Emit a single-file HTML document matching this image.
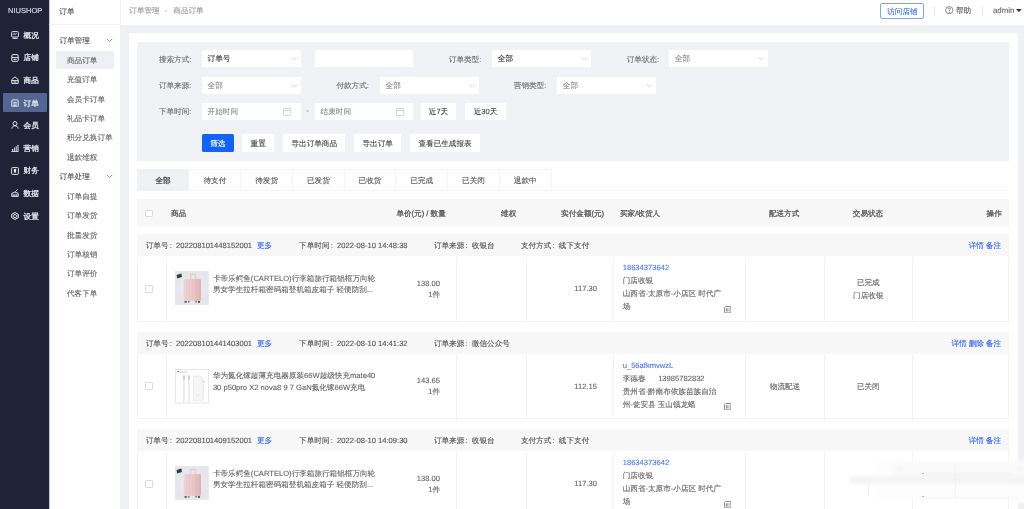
<!DOCTYPE html>
<html><head><meta charset="utf-8">
<style>
*{margin:0;padding:0;box-sizing:border-box}
html,body{width:1024px;height:509px;overflow:hidden}
body{position:relative;text-rendering:geometricPrecision;background:#eff0f4;font-family:"Liberation Sans",sans-serif;font-size:7.6px;color:#555}
#root{position:absolute;left:0;top:0;width:1024px;height:509px;will-change:transform;filter:blur(0.35px)}
.a{position:absolute}
.t{position:absolute;white-space:nowrap;line-height:10px;-webkit-text-stroke-width:0.12px}
.sb{color:#e3e5ec;-webkit-text-stroke-width:0.3px}
.s2h{color:#555}
.s2{color:#666}
.lbl{color:#6e6e6e}
.vd{color:#333}
.vl{color:#8c8c8c}
.vb{color:#444}
.tab{color:#555}
.th{color:#555;-webkit-text-stroke:0.25px #555}
.oh{color:#555}
.lk{color:#2f62f6}
.lk2{color:#4f76f6}
.bd{color:#666}
.fc{display:inline-block;width:7.6px;padding-left:1.2px}
</style></head><body><div id="root">

<div class="a" style="left:0.00px;top:0.00px;width:49.30px;height:509.00px;background:#1e2338"></div>
<div class="a" style="left:49.30px;top:0.00px;width:70.70px;height:509.00px;background:#fff"></div>
<div class="a" style="left:49.20px;top:0.00px;width:0.90px;height:509.00px;background:#c9cbd3"></div>
<div class="a" style="left:120.00px;top:0.00px;width:904.00px;height:24.70px;background:#fff"></div>
<div class="a" style="left:120.00px;top:0.00px;width:0.80px;height:24.70px;background:#f2f2f2"></div>
<div class="a" style="left:128.85px;top:32.90px;width:888.75px;height:476.10px;background:#fff"></div>
<div class="a" style="left:137.10px;top:41.60px;width:872.00px;height:119.00px;background:#f1f2f5"></div>
<div class="t" style="left:8.2px;top:7.2px;font-size:7.2px;line-height:8px;color:#cfd2da;letter-spacing:0px;-webkit-text-stroke-width:0.2px;transform:scaleX(1.05);transform-origin:0 0">NIUSHOP</div>
<div class="a" style="left:2.90px;top:93.30px;width:44.00px;height:19.20px;background:#536692;border-radius:1px"></div>
<svg class="a" style="left:11px;top:31.00px" width="8" height="8" viewBox="0 0 8 8" fill="none" stroke="#e3e5ec" stroke-width="1"><rect x="0.6" y="0.6" width="6.8" height="5.4" rx="0.8"/><path d="M1.8 3.6 L3 2.6 L4.2 3.4 L5.6 2.4"/><path d="M1.5 7.4 H6.5"/></svg>
<div class="t sb" style="left:23.60px;top:30.80px;">概况</div>
<svg class="a" style="left:11px;top:53.60px" width="8" height="8" viewBox="0 0 8 8" fill="none" stroke="#e3e5ec" stroke-width="1"><rect x="0.8" y="0.6" width="6.4" height="6.8" rx="1.2"/><path d="M0.8 3.6 H7.2"/><path d="M2.4 5.4 H5.6"/></svg>
<div class="t sb" style="left:23.60px;top:53.40px;">店铺</div>
<svg class="a" style="left:11px;top:76.20px" width="8" height="8" viewBox="0 0 8 8" fill="none" stroke="#e3e5ec" stroke-width="1"><path d="M0.8 7.4 V3.6 L4 0.8 L7.2 3.6 V7.4 Z"/><path d="M0.8 4.6 H7.2"/><path d="M2.6 6 H5.4"/></svg>
<div class="t sb" style="left:23.60px;top:76.00px;">商品</div>
<svg class="a" style="left:11px;top:98.80px" width="8" height="8" viewBox="0 0 8 8" fill="none" stroke="#e3e5ec" stroke-width="1"><rect x="0.8" y="0.9" width="6.4" height="7" rx="0.6"/><path d="M2.2 3.4 H5.8 M2.2 5 H5.8 M2.2 6.6 H5.8"/></svg>
<div class="t sb" style="left:23.60px;top:98.60px;">订单</div>
<svg class="a" style="left:11px;top:121.40px" width="8" height="8" viewBox="0 0 8 8" fill="none" stroke="#e3e5ec" stroke-width="1"><circle cx="4" cy="2.6" r="2"/><path d="M0.8 7.6 C1.2 5.4 2.4 4.8 4 4.8 C5.6 4.8 6.8 5.4 7.2 7.6"/></svg>
<div class="t sb" style="left:23.60px;top:121.20px;">会员</div>
<svg class="a" style="left:11px;top:144.00px" width="8" height="8" viewBox="0 0 8 8" fill="none" stroke="#e3e5ec" stroke-width="1"><path d="M1.6 7 V5 M3.4 7 V3.6 M5.2 7 V2.2 M7 7 V0.8"/><path d="M0.4 7.6 H7.6"/></svg>
<div class="t sb" style="left:23.60px;top:143.80px;">营销</div>
<svg class="a" style="left:11px;top:166.60px" width="8" height="8" viewBox="0 0 8 8" fill="none" stroke="#e3e5ec" stroke-width="1"><rect x="0.6" y="0.6" width="6.8" height="6.8" rx="0.8"/><rect x="2.9" y="2" width="2.2" height="3.6" fill="#e8e9ee" stroke="none"/></svg>
<div class="t sb" style="left:23.60px;top:166.40px;">财务</div>
<svg class="a" style="left:11px;top:189.20px" width="8" height="8" viewBox="0 0 8 8" fill="none" stroke="#e3e5ec" stroke-width="1"><path d="M0.8 7.4 V4.4 L4 3 L7.2 4.4 V7.4 Z"/><path d="M2.2 7.2 V5.2 M4 7.2 V4.8 M5.8 7.2 V5.2"/><path d="M4.4 2.6 L6.6 0.6"/></svg>
<div class="t sb" style="left:23.60px;top:189.00px;">数据</div>
<svg class="a" style="left:11px;top:211.80px" width="8" height="8" viewBox="0 0 8 8" fill="none" stroke="#e3e5ec" stroke-width="1"><path d="M4 0.5 L7.3 2.3 V5.7 L4 7.5 L0.7 5.7 V2.3 Z"/><path d="M2.2 3.4 L4 2.4 L5.8 3.4 V4.8 L4 5.8 L2.2 4.8 Z"/></svg>
<div class="t sb" style="left:23.60px;top:211.60px;">设置</div>
<div class="a" style="left:49.30px;top:24.20px;width:70.70px;height:0.80px;background:#f2f3f5"></div>
<div class="t s2h" style="left:59.30px;top:6.50px;">订单</div>
<div class="t s2h" style="left:59.40px;top:36.20px;">订单管理</div>
<svg class="a" style="left:105.6px;top:37.70px" width="7" height="5" viewBox="0 0 7 5" fill="none" stroke="#777" stroke-width="0.8"><path d="M0.8 0.9 L3.5 3.6 L6.2 0.9"/></svg>
<div class="a" style="left:56.30px;top:50.70px;width:57.90px;height:18.00px;background:#eff0f4"></div>
<div class="t s2" style="left:67.00px;top:55.80px;">商品订单</div>
<div class="t s2" style="left:67.00px;top:75.20px;">充值订单</div>
<div class="t s2" style="left:67.00px;top:94.60px;">会员卡订单</div>
<div class="t s2" style="left:67.00px;top:114.00px;">礼品卡订单</div>
<div class="t s2" style="left:67.00px;top:133.40px;">积分兑换订单</div>
<div class="t s2" style="left:67.00px;top:152.80px;">退款维权</div>
<div class="t s2h" style="left:59.40px;top:172.30px;">订单处理</div>
<svg class="a" style="left:105.6px;top:173.80px" width="7" height="5" viewBox="0 0 7 5" fill="none" stroke="#777" stroke-width="0.8"><path d="M0.8 0.9 L3.5 3.6 L6.2 0.9"/></svg>
<div class="t s2" style="left:67.00px;top:192.00px;">订单自提</div>
<div class="t s2" style="left:67.00px;top:211.30px;">订单发货</div>
<div class="t s2" style="left:67.00px;top:230.60px;">批量发货</div>
<div class="t s2" style="left:67.00px;top:249.90px;">订单核销</div>
<div class="t s2" style="left:67.00px;top:269.20px;">订单评价</div>
<div class="t s2" style="left:67.00px;top:288.50px;">代客下单</div>
<div class="t " style="left:129.30px;top:6.20px;color:#9a9a9a">订单管理</div>
<div class="t " style="left:164.60px;top:6.20px;color:#999">-</div>
<div class="t " style="left:173.30px;top:6.20px;color:#9a9a9a">商品订单</div>
<div class="a" style="left:880.10px;top:3.10px;width:43.80px;height:15.65px;border:1px solid #7aa3ff;border-radius:2px"></div>
<div class="t " style="left:887.20px;top:6.80px;color:#3f73f5">访问店铺</div>
<div class="a" style="left:934.20px;top:6.60px;width:0.70px;height:8.20px;background:#e8e8e8"></div>
<svg class="a" style="left:945.3px;top:5.7px" width="8.4" height="8.4" viewBox="0 0 9 9" fill="none" stroke="#666" stroke-width="0.8"><circle cx="4.5" cy="4.5" r="3.9"/><path d="M3.2 3.5 C3.2 2.6 3.8 2.2 4.5 2.2 C5.3 2.2 5.8 2.7 5.8 3.4 C5.8 4.2 4.6 4.4 4.6 5.4"/><circle cx="4.6" cy="6.7" r="0.35" fill="#666"/></svg>
<div class="t " style="left:956.00px;top:6.00px;color:#555">帮助</div>
<div class="a" style="left:981.90px;top:6.60px;width:0.70px;height:8.20px;background:#e8e8e8"></div>
<div class="t " style="left:992.90px;top:6.10px;color:#666;font-size:7.9px">admin</div>
<svg class="a" style="left:1016.4px;top:9.2px" width="5.8" height="3.2" viewBox="0 0 6 3.4"><path d="M0 0 H6 L3 3.4 Z" fill="#333"/></svg>
<div class="t lbl" style="right:832.60px;top:54.70px;">搜索方式:</div>
<div class="a" style="left:202.00px;top:50.10px;width:98.50px;height:16.90px;background:#fff"></div>
<div class="t vd" style="left:207.60px;top:54.10px;">订单号</div>
<svg class="a" style="left:290.9px;top:56.9px" width="6.4" height="3.6" viewBox="0 0 6.4 3.6" fill="none" stroke="#c6c6c6" stroke-width="0.7"><path d="M0.4 0.4 L3.2 3.1 L6 0.4"/></svg>
<div class="a" style="left:314.90px;top:50.20px;width:98.10px;height:17.00px;background:#fff"></div>
<div class="t lbl" style="right:542.70px;top:54.70px;">订单类型:</div>
<div class="a" style="left:492.20px;top:50.10px;width:98.50px;height:16.90px;background:#fff"></div>
<div class="t vd" style="left:497.80px;top:54.10px;">全部</div>
<svg class="a" style="left:581.1px;top:56.9px" width="6.4" height="3.6" viewBox="0 0 6.4 3.6" fill="none" stroke="#c6c6c6" stroke-width="0.7"><path d="M0.4 0.4 L3.2 3.1 L6 0.4"/></svg>
<div class="t lbl" style="right:364.80px;top:54.70px;">订单状态:</div>
<div class="a" style="left:669.40px;top:50.10px;width:98.50px;height:16.90px;background:#fff"></div>
<div class="t vl" style="left:675.00px;top:54.10px;">全部</div>
<svg class="a" style="left:758.3px;top:56.9px" width="6.4" height="3.6" viewBox="0 0 6.4 3.6" fill="none" stroke="#c6c6c6" stroke-width="0.7"><path d="M0.4 0.4 L3.2 3.1 L6 0.4"/></svg>
<div class="t lbl" style="right:832.60px;top:81.30px;">订单来源:</div>
<div class="a" style="left:202.00px;top:77.00px;width:98.50px;height:16.90px;background:#fff"></div>
<div class="t vl" style="left:207.60px;top:81.00px;">全部</div>
<svg class="a" style="left:290.9px;top:83.8px" width="6.4" height="3.6" viewBox="0 0 6.4 3.6" fill="none" stroke="#c6c6c6" stroke-width="0.7"><path d="M0.4 0.4 L3.2 3.1 L6 0.4"/></svg>
<div class="t lbl" style="right:655.10px;top:81.30px;">付款方式:</div>
<div class="a" style="left:380.00px;top:77.00px;width:98.50px;height:16.90px;background:#fff"></div>
<div class="t vl" style="left:385.60px;top:81.00px;">全部</div>
<svg class="a" style="left:468.9px;top:83.8px" width="6.4" height="3.6" viewBox="0 0 6.4 3.6" fill="none" stroke="#c6c6c6" stroke-width="0.7"><path d="M0.4 0.4 L3.2 3.1 L6 0.4"/></svg>
<div class="t lbl" style="right:477.70px;top:81.30px;">营销类型:</div>
<div class="a" style="left:557.20px;top:77.00px;width:98.50px;height:16.90px;background:#fff"></div>
<div class="t vl" style="left:562.80px;top:81.00px;">全部</div>
<svg class="a" style="left:646.1px;top:83.8px" width="6.4" height="3.6" viewBox="0 0 6.4 3.6" fill="none" stroke="#c6c6c6" stroke-width="0.7"><path d="M0.4 0.4 L3.2 3.1 L6 0.4"/></svg>
<div class="t lbl" style="right:832.60px;top:107.40px;">下单时间:</div>
<div class="a" style="left:202.00px;top:103.20px;width:98.50px;height:16.90px;background:#fff"></div>
<div class="t vl" style="left:207.60px;top:107.20px;">开始时间</div>
<svg class="a" style="left:283px;top:107.8px" width="8.4" height="8" viewBox="0 0 8.4 8" fill="none" stroke="#c4c4c4" stroke-width="0.75"><rect x="0.5" y="0.5" width="7.4" height="7" rx="0.8"/><path d="M0.5 2.6 H7.9"/></svg>
<div class="t " style="left:306.20px;top:106.40px;color:#666">-</div>
<div class="a" style="left:315.00px;top:103.20px;width:98.00px;height:16.90px;background:#fff"></div>
<div class="t vl" style="left:320.60px;top:107.20px;">结束时间</div>
<svg class="a" style="left:396px;top:107.8px" width="8.4" height="8" viewBox="0 0 8.4 8" fill="none" stroke="#c4c4c4" stroke-width="0.75"><rect x="0.5" y="0.5" width="7.4" height="7" rx="0.8"/><path d="M0.5 2.6 H7.9"/></svg>
<div class="a" style="left:420.60px;top:103.10px;width:35.80px;height:16.90px;background:#fff"></div>
<div class="t vb" style="left:378.50px;width:120px;text-align:center;top:107.40px;">近7天</div>
<div class="a" style="left:464.90px;top:103.10px;width:41.30px;height:16.90px;background:#fff"></div>
<div class="t vb" style="left:425.55px;width:120px;text-align:center;top:107.40px;">近30天</div>
<div class="a" style="left:201.60px;top:134.20px;width:32.30px;height:18.20px;background:#1263fb;border-radius:1.5px"></div>
<div class="t " style="left:157.75px;width:120px;text-align:center;top:139.20px;color:#fff">筛选</div>
<div class="a" style="left:241.90px;top:134.40px;width:32.60px;height:17.80px;background:#fff;border-radius:1px"></div>
<div class="t vb" style="left:198.20px;width:120px;text-align:center;top:139.20px;">重置</div>
<div class="a" style="left:283.10px;top:134.40px;width:62.30px;height:17.80px;background:#fff;border-radius:1px"></div>
<div class="t vb" style="left:254.25px;width:120px;text-align:center;top:139.20px;">导出订单商品</div>
<div class="a" style="left:353.90px;top:134.40px;width:47.50px;height:17.80px;background:#fff;border-radius:1px"></div>
<div class="t vb" style="left:317.65px;width:120px;text-align:center;top:139.20px;">导出订单</div>
<div class="a" style="left:409.90px;top:134.40px;width:70.30px;height:17.80px;background:#fff;border-radius:1px"></div>
<div class="t vb" style="left:385.05px;width:120px;text-align:center;top:139.20px;">查看已生成报表</div>
<div class="a" style="left:137.00px;top:190.20px;width:872.40px;height:1.00px;background:#f6f6f6"></div>
<div class="a" style="left:189.00px;top:168.90px;width:362.60px;height:22.30px;background:#fff;border:1px solid #f5f5f5;border-left:none"></div>
<div class="a" style="left:137.00px;top:168.90px;width:52.00px;height:22.40px;background:#f0f1f4"></div>
<div class="t tab" style="left:103.00px;width:120px;text-align:center;top:176.40px;color:#444;-webkit-text-stroke:0.25px #444">全部</div>
<div class="a" style="left:240.20px;top:168.90px;width:1.00px;height:22.30px;background:#f4f4f4"></div>
<div class="t tab" style="left:154.85px;width:120px;text-align:center;top:176.40px;">待支付</div>
<div class="a" style="left:292.10px;top:168.90px;width:1.00px;height:22.30px;background:#f4f4f4"></div>
<div class="t tab" style="left:206.65px;width:120px;text-align:center;top:176.40px;">待发货</div>
<div class="a" style="left:343.60px;top:168.90px;width:1.00px;height:22.30px;background:#f4f4f4"></div>
<div class="t tab" style="left:258.35px;width:120px;text-align:center;top:176.40px;">已发货</div>
<div class="a" style="left:395.30px;top:168.90px;width:1.00px;height:22.30px;background:#f4f4f4"></div>
<div class="t tab" style="left:309.95px;width:120px;text-align:center;top:176.40px;">已收货</div>
<div class="a" style="left:447.20px;top:168.90px;width:1.00px;height:22.30px;background:#f4f4f4"></div>
<div class="t tab" style="left:361.75px;width:120px;text-align:center;top:176.40px;">已完成</div>
<div class="a" style="left:498.70px;top:168.90px;width:1.00px;height:22.30px;background:#f4f4f4"></div>
<div class="t tab" style="left:413.45px;width:120px;text-align:center;top:176.40px;">已关闭</div>
<div class="t tab" style="left:465.20px;width:120px;text-align:center;top:176.40px;">退款中</div>
<div class="a" style="left:137.00px;top:199.20px;width:872.40px;height:27.00px;background:#f7f7f7"></div>
<div class="a" style="left:145.1px;top:209.6px;width:7.8px;height:7.8px;background:#fff;border:0.7px solid #dcdcdc;border-radius:1px"></div>
<div class="t th" style="left:171.00px;top:209.20px;">商品</div>
<div class="t th" style="left:396.40px;top:209.20px;">单价(元) / 数量</div>
<div class="t th" style="left:501.10px;top:209.20px;">维权</div>
<div class="t th" style="left:561.10px;top:209.20px;">实付金额(元)</div>
<div class="t th" style="left:620.00px;top:209.20px;">买家/收货人</div>
<div class="t th" style="left:768.90px;top:209.20px;">配送方式</div>
<div class="t th" style="left:852.80px;top:209.20px;">交易状态</div>
<div class="t th" style="left:986.60px;top:209.20px;">操作</div>
<div class="a" style="left:137.00px;top:234.40px;width:872.40px;height:22.10px;background:#f7f7f7"></div>
<div class="t oh" style="left:145.70px;top:241.30px;">订单号<span class="fc">:</span>202208101448152001</div>
<div class="t lk" style="left:257.00px;top:241.30px;">更多</div>
<div class="t oh" style="left:299.10px;top:241.30px;">下单时间<span class="fc">:</span>2022-08-10 14:48:38</div>
<div class="t oh" style="left:433.90px;top:241.30px;">订单来源<span class="fc">:</span>收银台</div>
<div class="t oh" style="left:520.90px;top:241.30px;">支付方式<span class="fc">:</span>线下支付</div>
<div class="t lk" style="right:22.80px;top:241.30px;">详情 备注</div>
<div class="a" style="left:137.00px;top:256.50px;width:872.40px;height:65.20px;border:1px solid #f3f3f3;border-top:none;background:#fff"></div>
<div class="a" style="left:166.00px;top:256.50px;width:1.00px;height:64.70px;background:#f3f3f3"></div>
<div class="a" style="left:455.75px;top:256.50px;width:1.00px;height:64.70px;background:#f3f3f3"></div>
<div class="a" style="left:526.10px;top:256.50px;width:1.00px;height:64.70px;background:#f3f3f3"></div>
<div class="a" style="left:612.80px;top:256.50px;width:1.00px;height:64.70px;background:#f3f3f3"></div>
<div class="a" style="left:744.90px;top:256.50px;width:1.00px;height:64.70px;background:#f3f3f3"></div>
<div class="a" style="left:823.90px;top:256.50px;width:1.00px;height:64.70px;background:#f3f3f3"></div>
<div class="a" style="left:911.60px;top:256.50px;width:1.00px;height:64.70px;background:#f3f3f3"></div>
<div class="a" style="left:145.3px;top:284.7px;width:8.2px;height:8.2px;background:#fff;border:0.7px solid #dcdcdc;border-radius:1px"></div>
<svg class="a" style="left:175.1px;top:271.2px" width="33.8" height="34" viewBox="0 0 34 34"><defs><linearGradient id="cg" x1="0" x2="1"><stop offset="0" stop-color="#efd5d5"/><stop offset="0.55" stop-color="#ebc8c9"/><stop offset="1" stop-color="#dfb0b3"/></linearGradient><radialGradient id="bgc"><stop offset="0" stop-color="#f0f1f5"/><stop offset="1" stop-color="#e4e6ec"/></radialGradient></defs><rect width="34" height="34" fill="url(#bgc)"/><rect x="8.6" y="7.6" width="17.6" height="22.6" rx="2" fill="url(#cg)"/><path d="M11.8 9 V29 M14.8 9 V29 M17.8 9 V29 M20.8 9 V29 M23.6 9 V29" stroke="#e3b9bb" stroke-width="0.45"/><path d="M15.8 7.6 V3.2 H20.4 V7.6" fill="none" stroke="#e6aeb0" stroke-width="0.7"/><rect x="9.6" y="30.1" width="2.2" height="1.8" fill="#555"/><rect x="23" y="30.1" width="2.2" height="1.8" fill="#555"/><rect x="13" y="30.1" width="1.6" height="1.5" fill="#777"/><rect x="20.4" y="30.1" width="1.6" height="1.5" fill="#777"/><path d="M1.6 4 L6.4 2.4 L7 6 L2.2 7.4 Z" fill="#3a3a3a"/></svg>
<div class="t bd" style="left:212.90px;top:273.60px;">卡帝乐鳄鱼(CARTELO)行李箱旅行箱铝框万向轮</div>
<div class="t bd" style="left:212.90px;top:285.10px;">男女学生拉杆箱密码箱登机箱皮箱子 轻便防刮...</div>
<div class="t bd" style="right:584.00px;top:278.90px;">138.00</div>
<div class="t bd" style="right:584.00px;top:289.50px;">1件</div>
<div class="t bd" style="right:427.00px;top:284.40px;">117.30</div>
<div class="t lk2" style="left:622.70px;top:263.00px;">18634373642</div>
<div class="t bd" style="left:622.70px;top:276.02px;">门店收银</div>
<div class="t bd" style="left:622.70px;top:289.04px;">山西省-太原市-小店区 时代广</div>
<div class="t bd" style="left:622.70px;top:302.06px;">场</div>
<svg class="a" style="left:723.6px;top:305.6px" width="7.4" height="7.4" viewBox="0 0 7.4 7.4" fill="none" stroke="#6a6a6a" stroke-width="0.8"><path d="M1.6 0.5 H6.4 Q6.9 0.5 6.9 1 V6.4 Q6.9 6.9 6.4 6.9 H1 Q0.5 6.9 0.5 6.4 V1.6 Z"/><path d="M2.4 2.2 V5.6 M3.9 2.2 V5.6"/><path d="M5.4 1.8 V5.8" stroke="#c8c8c8"/></svg>
<div class="t bd" style="left:808.30px;width:120px;text-align:center;top:278.10px;">已完成</div>
<div class="t bd" style="left:808.30px;width:120px;text-align:center;top:290.60px;">门店收银</div>
<div class="a" style="left:137.00px;top:331.90px;width:872.40px;height:22.10px;background:#f7f7f7"></div>
<div class="t oh" style="left:145.70px;top:338.80px;">订单号<span class="fc">:</span>202208101441403001</div>
<div class="t lk" style="left:257.00px;top:338.80px;">更多</div>
<div class="t oh" style="left:299.10px;top:338.80px;">下单时间<span class="fc">:</span>2022-08-10 14:41:32</div>
<div class="t oh" style="left:433.90px;top:338.80px;">订单来源<span class="fc">:</span>微信公众号</div>
<div class="t lk" style="right:22.80px;top:338.80px;">详情 删除 备注</div>
<div class="a" style="left:137.00px;top:354.00px;width:872.40px;height:65.20px;border:1px solid #f3f3f3;border-top:none;background:#fff"></div>
<div class="a" style="left:166.00px;top:354.00px;width:1.00px;height:64.70px;background:#f3f3f3"></div>
<div class="a" style="left:455.75px;top:354.00px;width:1.00px;height:64.70px;background:#f3f3f3"></div>
<div class="a" style="left:526.10px;top:354.00px;width:1.00px;height:64.70px;background:#f3f3f3"></div>
<div class="a" style="left:612.80px;top:354.00px;width:1.00px;height:64.70px;background:#f3f3f3"></div>
<div class="a" style="left:744.90px;top:354.00px;width:1.00px;height:64.70px;background:#f3f3f3"></div>
<div class="a" style="left:823.90px;top:354.00px;width:1.00px;height:64.70px;background:#f3f3f3"></div>
<div class="a" style="left:911.60px;top:354.00px;width:1.00px;height:64.70px;background:#f3f3f3"></div>
<div class="a" style="left:145.3px;top:382.2px;width:8.2px;height:8.2px;background:#fff;border:0.7px solid #dcdcdc;border-radius:1px"></div>
<svg class="a" style="left:175.1px;top:368.7px" width="34" height="34.5" viewBox="0 0 34 34.5" overflow="visible"><rect x="0.5" y="0.5" width="33" height="33.5" fill="#fff" stroke="#e2e2e2" stroke-width="0.8"/><path d="M2.2 2.2 Q3.2 1.4 4.2 2.2 L3.2 3.6 Z" fill="#e04848"/><rect x="5" y="2.4" width="7.4" height="1.2" fill="#d4d4d4"/><path d="M8.9 10 V33.5 M13.9 10 V33.5" stroke="#dcdcdc" stroke-width="1.3"/><path d="M8.9 10 V33.5 M13.9 10 V33.5" stroke="#fafafa" stroke-width="0.5"/><rect x="7.9" y="6.2" width="2" height="4.4" rx="0.4" fill="#d0d0d0"/><rect x="12.9" y="6.2" width="2" height="4.4" rx="0.4" fill="#d0d0d0"/><path d="M18.4 7.4 L25.6 6.8 L28.4 10.4 V30.4 L26 31.6 L18.4 31.4 Z" fill="#f5f5f5" stroke="#dedede" stroke-width="0.6"/><path d="M28.4 12.6 L30 13.4" stroke="#bbb" stroke-width="0.7"/><path d="M22 27 L23.4 25.6" stroke="#ccc" stroke-width="0.6"/></svg>
<div class="t bd" style="left:212.90px;top:371.10px;">华为氮化镓超薄充电器原装66W超级快充mate40</div>
<div class="t bd" style="left:212.90px;top:382.60px;">30 p50pro X2 nova8 9 7 GaN氮化镓66W充电</div>
<div class="t bd" style="right:584.00px;top:376.40px;">143.65</div>
<div class="t bd" style="right:584.00px;top:387.00px;">1件</div>
<div class="t bd" style="right:427.00px;top:381.90px;">112.15</div>
<div class="t lk2" style="left:622.70px;top:360.50px;">u_56afkmvwzL</div>
<div class="t bd" style="left:622.70px;top:373.52px;">李德春&nbsp;&nbsp;&nbsp;&nbsp;&nbsp;&nbsp;13985782832</div>
<div class="t bd" style="left:622.70px;top:386.54px;">贵州省-黔南布依族苗族自治</div>
<div class="t bd" style="left:622.70px;top:399.56px;">州-瓮安县 玉山镇龙蟠</div>
<svg class="a" style="left:723.6px;top:403.1px" width="7.4" height="7.4" viewBox="0 0 7.4 7.4" fill="none" stroke="#6a6a6a" stroke-width="0.8"><path d="M1.6 0.5 H6.4 Q6.9 0.5 6.9 1 V6.4 Q6.9 6.9 6.4 6.9 H1 Q0.5 6.9 0.5 6.4 V1.6 Z"/><path d="M2.4 2.2 V5.6 M3.9 2.2 V5.6"/><path d="M5.4 1.8 V5.8" stroke="#c8c8c8"/></svg>
<div class="t bd" style="left:725.00px;width:120px;text-align:center;top:382.05px;">物流配送</div>
<div class="t bd" style="left:808.30px;width:120px;text-align:center;top:382.00px;">已关闭</div>
<div class="a" style="left:137.00px;top:429.40px;width:872.40px;height:22.10px;background:#f7f7f7"></div>
<div class="t oh" style="left:145.70px;top:436.30px;">订单号<span class="fc">:</span>202208101409152001</div>
<div class="t lk" style="left:257.00px;top:436.30px;">更多</div>
<div class="t oh" style="left:299.10px;top:436.30px;">下单时间<span class="fc">:</span>2022-08-10 14:09:30</div>
<div class="t oh" style="left:433.90px;top:436.30px;">订单来源<span class="fc">:</span>收银台</div>
<div class="t oh" style="left:520.90px;top:436.30px;">支付方式<span class="fc">:</span>线下支付</div>
<div class="t lk" style="right:22.80px;top:436.30px;">详情 备注</div>
<div class="a" style="left:137.00px;top:451.50px;width:872.40px;height:65.20px;border:1px solid #f3f3f3;border-top:none;background:#fff"></div>
<div class="a" style="left:166.00px;top:451.50px;width:1.00px;height:64.70px;background:#f3f3f3"></div>
<div class="a" style="left:455.75px;top:451.50px;width:1.00px;height:64.70px;background:#f3f3f3"></div>
<div class="a" style="left:526.10px;top:451.50px;width:1.00px;height:64.70px;background:#f3f3f3"></div>
<div class="a" style="left:612.80px;top:451.50px;width:1.00px;height:64.70px;background:#f3f3f3"></div>
<div class="a" style="left:744.90px;top:451.50px;width:1.00px;height:64.70px;background:#f3f3f3"></div>
<div class="a" style="left:823.90px;top:451.50px;width:1.00px;height:64.70px;background:#f3f3f3"></div>
<div class="a" style="left:911.60px;top:451.50px;width:1.00px;height:64.70px;background:#f3f3f3"></div>
<div class="a" style="left:145.3px;top:479.7px;width:8.2px;height:8.2px;background:#fff;border:0.7px solid #dcdcdc;border-radius:1px"></div>
<svg class="a" style="left:175.1px;top:466.2px" width="33.8" height="34" viewBox="0 0 34 34"><defs><linearGradient id="cg" x1="0" x2="1"><stop offset="0" stop-color="#efd5d5"/><stop offset="0.55" stop-color="#ebc8c9"/><stop offset="1" stop-color="#dfb0b3"/></linearGradient><radialGradient id="bgc"><stop offset="0" stop-color="#f0f1f5"/><stop offset="1" stop-color="#e4e6ec"/></radialGradient></defs><rect width="34" height="34" fill="url(#bgc)"/><rect x="8.6" y="7.6" width="17.6" height="22.6" rx="2" fill="url(#cg)"/><path d="M11.8 9 V29 M14.8 9 V29 M17.8 9 V29 M20.8 9 V29 M23.6 9 V29" stroke="#e3b9bb" stroke-width="0.45"/><path d="M15.8 7.6 V3.2 H20.4 V7.6" fill="none" stroke="#e6aeb0" stroke-width="0.7"/><rect x="9.6" y="30.1" width="2.2" height="1.8" fill="#555"/><rect x="23" y="30.1" width="2.2" height="1.8" fill="#555"/><rect x="13" y="30.1" width="1.6" height="1.5" fill="#777"/><rect x="20.4" y="30.1" width="1.6" height="1.5" fill="#777"/><path d="M1.6 4 L6.4 2.4 L7 6 L2.2 7.4 Z" fill="#3a3a3a"/></svg>
<div class="t bd" style="left:212.90px;top:468.60px;">卡帝乐鳄鱼(CARTELO)行李箱旅行箱铝框万向轮</div>
<div class="t bd" style="left:212.90px;top:480.10px;">男女学生拉杆箱密码箱登机箱皮箱子 轻便防刮...</div>
<div class="t bd" style="right:584.00px;top:473.90px;">138.00</div>
<div class="t bd" style="right:584.00px;top:484.50px;">1件</div>
<div class="t bd" style="right:427.00px;top:479.40px;">117.30</div>
<div class="t lk2" style="left:622.70px;top:458.00px;">18634373642</div>
<div class="t bd" style="left:622.70px;top:471.02px;">门店收银</div>
<div class="t bd" style="left:622.70px;top:484.04px;">山西省-太原市-小店区 时代广</div>
<div class="t bd" style="left:622.70px;top:497.06px;">场</div>
<svg class="a" style="left:723.6px;top:500.6px" width="7.4" height="7.4" viewBox="0 0 7.4 7.4" fill="none" stroke="#6a6a6a" stroke-width="0.8"><path d="M1.6 0.5 H6.4 Q6.9 0.5 6.9 1 V6.4 Q6.9 6.9 6.4 6.9 H1 Q0.5 6.9 0.5 6.4 V1.6 Z"/><path d="M2.4 2.2 V5.6 M3.9 2.2 V5.6"/><path d="M5.4 1.8 V5.8" stroke="#c8c8c8"/></svg>
<div class="a" style="left:874px;top:461px;width:160px;height:38px;background:#fdfdfd;filter:blur(2.5px)"></div>
<div class="a" style="left:1012px;top:463px;width:20px;height:40px;background:#fcfcfc;filter:blur(1.5px)"></div>
<div class="a" style="left:895px;top:464px;width:130px;height:10px;background:rgba(246,246,246,0.9);filter:blur(3px)"></div>
<div class="a" style="left:850px;top:475.5px;width:178px;height:8.5px;background:rgba(243,243,243,0.95);filter:blur(1.8px)"></div>
<div class="a" style="left:867.5px;top:484px;width:0.8px;height:11px;background:rgba(238,238,238,0.8);filter:blur(0.5px)"></div>
<div class="a" style="left:955px;top:464px;width:0.8px;height:34px;background:rgba(240,240,240,0.7);filter:blur(0.6px)"></div>
<div class="a" style="left:921.5px;top:472.8px;width:2.2px;height:1.5px;background:#b0b0b0;filter:blur(0.4px)"></div>
<div class="a" style="left:921.5px;top:495.6px;width:2.2px;height:1.5px;background:#b0b0b0;filter:blur(0.4px)"></div>
<div class="a" style="left:923px;top:474px;width:90px;height:1.2px;background:rgba(235,235,235,0.8);filter:blur(0.8px)"></div>
<div class="a" style="left:923px;top:497px;width:90px;height:1.2px;background:rgba(235,235,235,0.8);filter:blur(0.8px)"></div>
</div></body></html>
